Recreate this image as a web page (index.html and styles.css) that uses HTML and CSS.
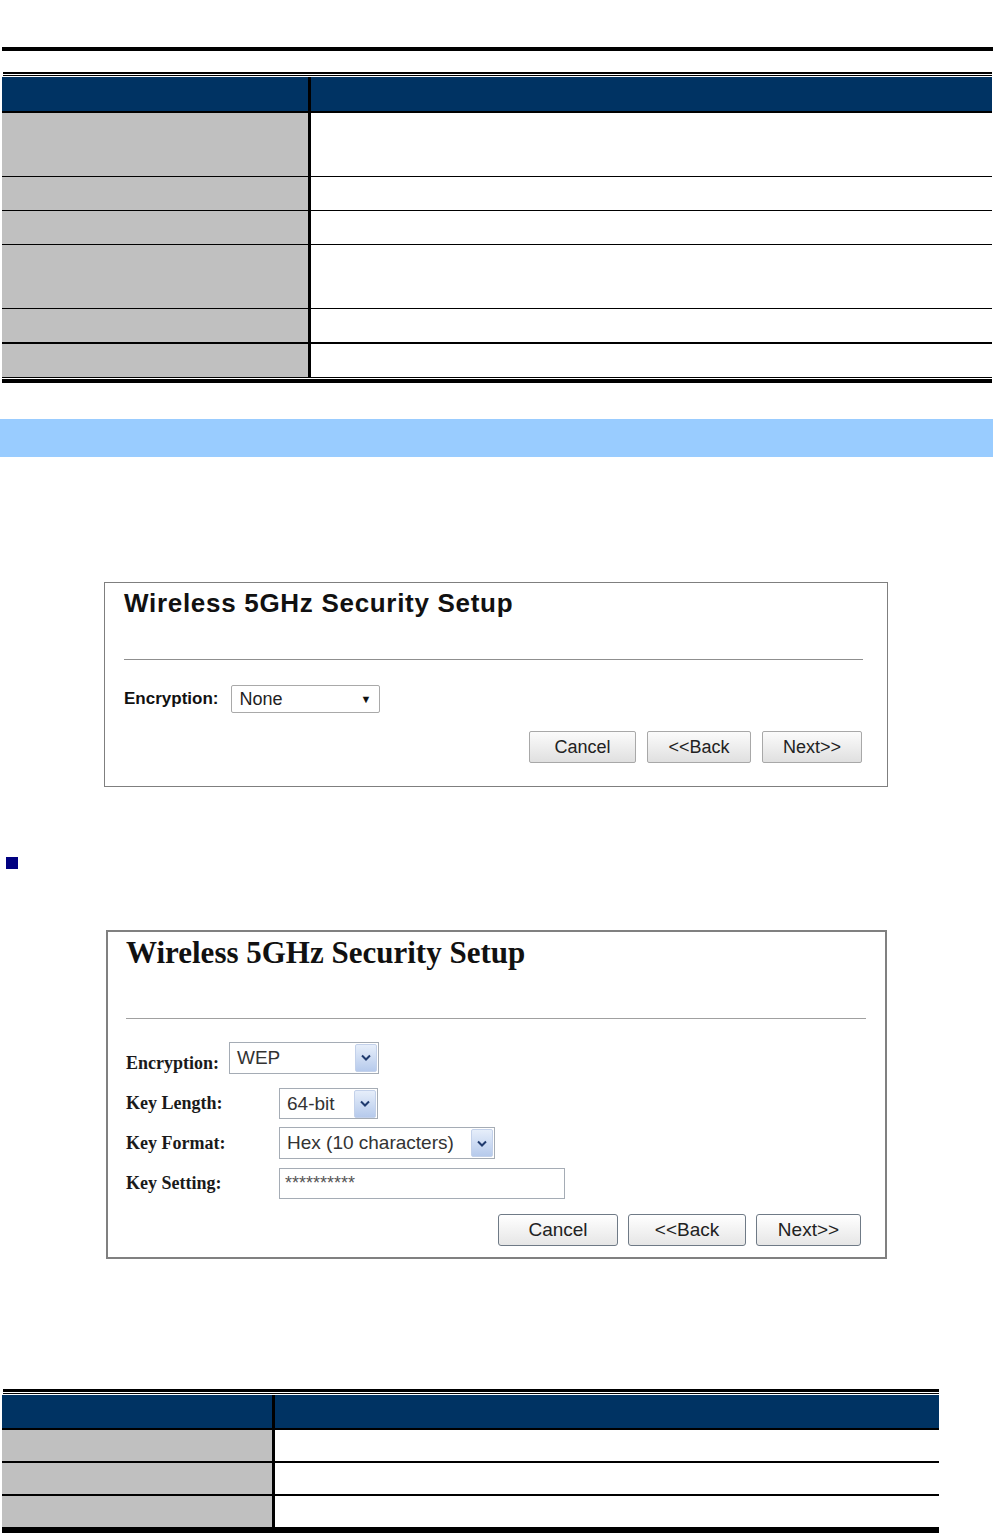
FILE: index.html
```html
<!DOCTYPE html>
<html>
<head>
  <title>Wireless 5GHz Security Setup</title>
  <link rel="stylesheet" href="styles.css">
</head>
<body>
  <div class="top-rule"></div>

  <div class="spec spec-wide">
    <div class="spec-line-thick"></div>
    <div class="spec-line-thin"></div>
    <div class="spec-row spec-head"><div class="spec-key"></div><div class="spec-val"></div></div>
    <div class="spec-row two-line"><div class="spec-key"></div><div class="spec-val"></div></div>
    <div class="spec-row"><div class="spec-key"></div><div class="spec-val"></div></div>
    <div class="spec-row"><div class="spec-key"></div><div class="spec-val"></div></div>
    <div class="spec-row two-line"><div class="spec-key"></div><div class="spec-val"></div></div>
    <div class="spec-row thick"><div class="spec-key"></div><div class="spec-val"></div></div>
    <div class="spec-row"><div class="spec-key"></div><div class="spec-val"></div></div>
    <div class="spec-end"></div>
  </div>

  <div class="section-bar"></div>

  <!-- screenshot 1: encryption none -->
  <div class="setup">
    <h3 class="setup-title">Wireless 5GHz Security Setup</h3>
    <div class="setup-rule"></div>
    <div class="field">
      <span class="field-label">Encryption:</span>
      <div class="select-plain"><span>None</span><span class="caret-plain">&#9660;</span></div>
    </div>
    <div class="actions">
      <button class="btn btn-cancel">Cancel</button>
      <button class="btn btn-back">&lt;&lt;Back</button>
      <button class="btn btn-next">Next&gt;&gt;</button>
    </div>
  </div>

  <div class="bullet"></div>

  <!-- screenshot 2: WEP -->
  <div class="setup-classic">
    <h3 class="classic-title">Wireless 5GHz Security Setup</h3>
    <div class="classic-rule"></div>

    <div class="kv-row kv-enc">
      <span class="kv-label">Encryption:</span>
      <div class="select-xp sel-enc">
        <span>WEP</span>
        <span class="arrow"><svg width="10" height="7" viewBox="0 0 10 7"><path d="M1 1.5 L5 5.5 L9 1.5" fill="none" stroke="#1f3a6e" stroke-width="2"/></svg></span>
      </div>
    </div>

    <div class="kv-row kv-len">
      <span class="kv-label">Key Length:</span>
      <div class="select-xp sel-len">
        <span>64-bit</span>
        <span class="arrow"><svg width="10" height="7" viewBox="0 0 10 7"><path d="M1 1.5 L5 5.5 L9 1.5" fill="none" stroke="#1f3a6e" stroke-width="2"/></svg></span>
      </div>
    </div>

    <div class="kv-row kv-fmt">
      <span class="kv-label">Key Format:</span>
      <div class="select-xp sel-fmt">
        <span>Hex (10 characters)</span>
        <span class="arrow"><svg width="10" height="7" viewBox="0 0 10 7"><path d="M1 1.5 L5 5.5 L9 1.5" fill="none" stroke="#1f3a6e" stroke-width="2"/></svg></span>
      </div>
    </div>

    <div class="kv-row kv-key">
      <span class="kv-label">Key Setting:</span>
      <div class="key-input">**********</div>
    </div>

    <div class="actions-classic">
      <button class="btn-xp xp-cancel">Cancel</button>
      <button class="btn-xp xp-back">&lt;&lt;Back</button>
      <button class="btn-xp xp-next">Next&gt;&gt;</button>
    </div>
  </div>

  <div class="spec spec-narrow">
    <div class="spec-line-thick"></div>
    <div class="spec-line-thin"></div>
    <div class="spec-row spec-head"><div class="spec-key"></div><div class="spec-val"></div></div>
    <div class="spec-row"><div class="spec-key"></div><div class="spec-val"></div></div>
    <div class="spec-row"><div class="spec-key"></div><div class="spec-val"></div></div>
    <div class="spec-row"><div class="spec-key"></div><div class="spec-val"></div></div>
    <div class="spec-end"></div>
  </div>
</body>
</html>
```

FILE: styles.css
```css
body {
  margin: 0;
  padding: 0;
  background-color: white;
  font-family: "Liberation Sans", Arial, sans-serif;
}

.top-rule {
  height: 4px;
  margin: 47px 0 0 2px;
  background-color: black;
}

/* parameter tables */
.spec {
  margin-left: 2px;
}

.spec-wide {
  width: 990px;
  margin-top: 21px;
}

.spec-narrow {
  width: 937px;
  margin-top: 130px;
}

.spec-line-thick {
  height: 2px;
  margin-left: 1px;
  background-color: black;
}

.spec-narrow .spec-line-thick {
  height: 3px;
}

.spec-line-thin {
  height: 1px;
  margin: 1px 0 1px 1px;
  background-color: black;
}

.spec-row {
  display: flex;
  height: 33px;
  border-bottom: 1px solid black;
}

.spec-row.two-line {
  height: 63px;
}

.spec-row.thick {
  border-bottom-width: 2px;
}

.spec-row.spec-head {
  height: 34px;
  border-bottom-width: 2px;
}

.spec-key {
  width: 306px;
  background-color: #c0c0c0;
  border-right: 3px solid black;
}

.spec-val {
  flex: 1;
}

.spec-head .spec-key,
.spec-head .spec-val {
  background-color: #003363;
}

.spec-end {
  height: 4px;
  margin-top: 1px;
  background-color: black;
}

.spec-narrow .spec-row {
  height: 31px;
  border-bottom-width: 2px;
}

.spec-narrow .spec-row.spec-head {
  height: 33px;
}

.spec-narrow .spec-key {
  width: 270px;
}

.spec-narrow .spec-end {
  height: 6px;
  margin-top: 0;
}

.section-bar {
  height: 38px;
  margin-top: 36px;
  background-color: #99ccff;
}

/* first setup screenshot */
.setup {
  box-sizing: border-box;
  width: 784px;
  height: 205px;
  margin: 125px 0 0 104px;
  padding: 5px 24px 0 19px;
  border: 1px solid #7f7f7f;
}

.setup-title {
  margin: 0;
  font-size: 26px;
  line-height: 31px;
  font-weight: bold;
  letter-spacing: 0.7px;
  color: #111;
}

.setup-rule {
  height: 1px;
  margin-top: 40px;
  background-color: #8f8f8f;
}

.field {
  display: flex;
  align-items: center;
  margin-top: 25px;
}

.field-label {
  margin-right: 13px;
  font-size: 17px;
  font-weight: bold;
  color: #111;
}

.select-plain {
  box-sizing: border-box;
  display: flex;
  align-items: center;
  justify-content: space-between;
  width: 149px;
  height: 28px;
  padding: 0 8px 0 7px;
  border: 1px solid #a9a9a9;
  border-radius: 2px;
  font-size: 18px;
  color: #222;
}

.caret-plain {
  font-size: 11px;
  color: #111;
}

.actions {
  display: flex;
  justify-content: flex-end;
  gap: 11px;
  margin-top: 18px;
  margin-right: 1px;
}

.btn {
  box-sizing: border-box;
  height: 32px;
  padding: 0;
  border: 1px solid #a8a8a8;
  border-radius: 2px;
  background: linear-gradient(#fbfbfb, #e0e0e0);
  font-family: "Liberation Sans", Arial, sans-serif;
  font-size: 18px;
  color: #222;
}

.btn-cancel { width: 107px; }
.btn-back { width: 104px; }
.btn-next { width: 100px; }

.bullet {
  width: 12px;
  height: 12px;
  margin: 70px 0 0 6px;
  background-color: #000080;
}

/* second setup screenshot */
.setup-classic {
  box-sizing: border-box;
  width: 781px;
  height: 329px;
  margin: 61px 0 0 106px;
  padding: 3px 19px 0 18px;
  border: 2px solid #808080;
}

.classic-title {
  margin: 0;
  font-family: "Liberation Serif", "Times New Roman", serif;
  font-size: 31px;
  line-height: 36px;
  font-weight: bold;
  color: #111;
}

.classic-rule {
  height: 1px;
  margin-top: 47px;
  background-color: #a0a0a0;
}

.kv-row {
  display: flex;
  align-items: center;
}

.kv-label {
  width: 153px;
  font-family: "Liberation Serif", "Times New Roman", serif;
  font-size: 18px;
  font-weight: bold;
  color: #1a1a1a;
}

.kv-enc { margin-top: 22px; }
.kv-len { margin-top: 14px; }
.kv-fmt { margin-top: 8px; }
.kv-key { margin-top: 9px; }

.kv-enc .kv-label {
  width: auto;
  margin: 12px 10px 0 0;
}

.select-xp {
  box-sizing: border-box;
  display: flex;
  align-items: center;
  height: 32px;
  padding-left: 7px;
  border: 1px solid #a5acb5;
  font-size: 19px;
  color: #333;
}

.select-xp .arrow {
  box-sizing: border-box;
  display: flex;
  align-items: center;
  justify-content: center;
  width: 22px;
  height: 28px;
  margin: 0 1px 0 auto;
  border: 1px solid #c3d1ea;
  border-radius: 2px;
  background: linear-gradient(#e6eefa, #b6caec);
}

.sel-enc { width: 150px; }
.sel-len { width: 99px; height: 31px; }
.sel-fmt { width: 216px; }

.key-input {
  box-sizing: border-box;
  display: flex;
  align-items: center;
  width: 286px;
  height: 31px;
  padding-left: 5px;
  border: 1px solid #a5acb5;
  font-size: 18px;
  color: #555;
}

.actions-classic {
  display: flex;
  justify-content: flex-end;
  gap: 10px;
  margin: 15px 5px 0 0;
}

.btn-xp {
  box-sizing: border-box;
  height: 32px;
  padding: 0;
  border: 1px solid #6f7a86;
  border-radius: 3px;
  background: linear-gradient(#ffffff, #e6e6e6);
  font-family: "Liberation Sans", Arial, sans-serif;
  font-size: 19px;
  color: #222;
}

.xp-cancel { width: 120px; }
.xp-back { width: 118px; }
.xp-next { width: 105px; }
```
